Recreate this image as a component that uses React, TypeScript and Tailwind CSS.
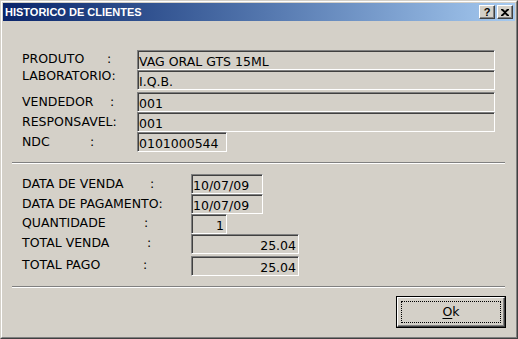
import React from "react";

const raised =
  "border border-t-white border-l-white border-r-[#404040] border-b-[#404040] shadow-[inset_-1px_-1px_0_#808080]";
const sunken =
  "border border-t-[#808080] border-l-[#808080] border-r-white border-b-white shadow-[inset_1px_1px_0_#404040]";

type Row = {
  label: string;
  nameW: number;
  value: string;
  boxW: number;
  right?: boolean;
  lt: string;
  mt: string;
};

const top: Row[] = [
  { label: "PRODUTO", nameW: 85, value: "VAG ORAL GTS 15ML", boxW: 358, lt: "pt-[1px]", mt: "" },
  { label: "LABORATORIO", nameW: 0, value: "I.Q.B.", boxW: 358, lt: "-mt-[2px]", mt: "" },
  { label: "VENDEDOR", nameW: 88, value: "001", boxW: 358, lt: "pt-[2px]", mt: "mt-[2px]" },
  { label: "RESPONSAVEL", nameW: 0, value: "001", boxW: 358, lt: "pt-[2px]", mt: "" },
  { label: "NDC", nameW: 68, value: "0101000544", boxW: 90, lt: "pt-[2px]", mt: "" },
];

const bottom: Row[] = [
  { label: "DATA DE VENDA", nameW: 128, value: "10/07/09", boxW: 72, lt: "pt-[2px]", mt: "" },
  { label: "DATA DE PAGAMENTO", nameW: 0, value: "10/07/09", boxW: 72, lt: "pt-[2px]", mt: "" },
  { label: "QUANTIDADE", nameW: 122, value: "1", boxW: 36, right: true, lt: "pt-[1px]", mt: "" },
  { label: "TOTAL VENDA", nameW: 125, value: "25.04", boxW: 108, right: true, lt: "pt-[1px]", mt: "" },
  { label: "TOTAL PAGO", nameW: 121, value: "25.04", boxW: 108, right: true, lt: "pt-[1px]", mt: "mt-[2px]" },
];

function Field({ row, labelW }: { row: Row; labelW: number }) {
  return (
    <div className={`flex items-start ${row.mt}`}>
      <div className={`flex shrink-0 ${row.lt}`} style={{ width: labelW }}>
        <span className="inline-block" style={row.nameW ? { width: row.nameW } : undefined}>
          {row.label}
        </span>
        <span>:</span>
      </div>
      <div
        className={`h-[20px] bg-[#d4d0c8] pt-[3px] text-black ${sunken} ${row.right ? "pr-[2px] text-right" : "pl-[1px]"}`}
        style={{ width: row.boxW }}
      >
        {row.value}
      </div>
    </div>
  );
}

function Separator() {
  return <div className="ml-[9px] mr-[10px] h-[2px] border-t border-t-[#808080] border-b border-b-white" />;
}

export default function App() {
  return (
    <div className="h-[339px] w-[518px] border border-t-[#d4d0c8] border-l-[#d4d0c8] border-r-[#404040] border-b-[#404040] bg-[#d4d0c8]">
      <div className="flex h-full flex-col border border-t-white border-l-white border-r-[#808080] border-b-[#808080] p-[1px]">
        {/* title bar */}
        <div className="flex h-[18px] shrink-0 items-center justify-between bg-gradient-to-r from-[#0a246a] to-[#a6caf0] pl-[2px] pr-[2px]">
          <span className="font-['Liberation_Sans',sans-serif] text-[11px] font-bold leading-none text-white">
            HISTORICO DE CLIENTES
          </span>
          <div className="flex gap-[2px]">
            <button className={`flex h-[14px] w-[16px] items-center justify-center bg-[#d4d0c8] ${raised}`}>
              <span className="font-['Liberation_Sans',sans-serif] text-[11px] font-bold leading-none text-black">?</span>
            </button>
            <button className={`flex h-[14px] w-[16px] items-center justify-center bg-[#d4d0c8] ${raised}`}>
              <svg width="8" height="7" viewBox="0 0 8 7">
                <path d="M0 0h2l2 2 2-2h2v1L5 3.5 8 6v1H6L4 5 2 7H0V6l3-2.5L0 1z" fill="#000" />
              </svg>
            </button>
          </div>
        </div>

        {/* body */}
        <div className="flex flex-1 flex-col font-['DejaVu_Sans',Verdana,sans-serif] text-[12.5px] leading-[15px] text-black">
          <div className="pl-[19px] pt-[29px]">
            {top.map((r) => (
              <Field key={r.label} row={r} labelW={115} />
            ))}
          </div>

          <div className="mt-[10px]">
            <Separator />
          </div>

          <div className="pl-[19px] pt-[10px]">
            {bottom.map((r, i) => (
              <Field key={i} row={r} labelW={169} />
            ))}
          </div>

          <div className="mt-[10px]">
            <Separator />
          </div>

          <div className="flex justify-end pr-[9px] pt-[8px]">
            <button className="h-[32px] w-[110px] border border-black bg-[#d4d0c8]">
              <div className={`flex h-full w-full items-center justify-center p-[3px] ${raised}`}>
                <div className="flex h-full w-full items-center justify-center border border-dotted border-black">
                  <span className="text-[12.5px] leading-none">
                    <span className="underline underline-offset-2">O</span>k
                  </span>
                </div>
              </div>
            </button>
          </div>
        </div>
      </div>
    </div>
  );
}
